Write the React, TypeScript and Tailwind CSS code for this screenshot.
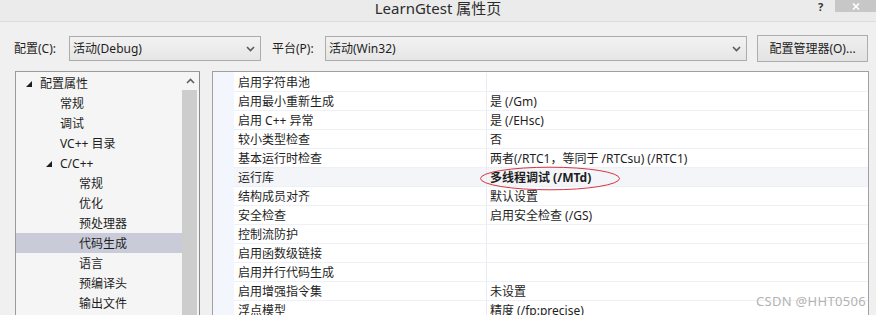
import React from "react";

const font = { fontFamily: '"Noto Sans", "Noto Sans CJK SC", sans-serif' };

function Chevron() {
  return (
    <svg width="9" height="6" viewBox="0 0 9 6" className="shrink-0">
      <path d="M1 1 L4.5 4.5 L8 1" fill="none" stroke="#5a5a5a" strokeWidth="1.6" />
    </svg>
  );
}

function Select({ text, width }: { text: string; width: string }) {
  return (
    <div
      className={`${width} h-[25px] mt-[1px] border border-[#acacac] bg-gradient-to-b from-[#f2f2f2] to-[#e6e6e6] flex items-center justify-between pl-[3px] pr-[5px]`}
    >
      <span className="text-[12px] text-[#1e1e1e] leading-[16px]">{text}</span>
      <Chevron />
    </div>
  );
}

function Tri() {
  return (
    <svg width="6" height="6" viewBox="0 0 6 6" className="shrink-0">
      <polygon points="6,0 6,6 0,6" fill="#1e1e1e" />
    </svg>
  );
}

const tree: { label: string; indent: number; tri?: boolean; sel?: boolean }[] = [
  { label: "配置属性", indent: 24, tri: true },
  { label: "常规", indent: 44 },
  { label: "调试", indent: 44 },
  { label: "VC++ 目录", indent: 44 },
  { label: "C/C++", indent: 44, tri: true },
  { label: "常规", indent: 63 },
  { label: "优化", indent: 63 },
  { label: "预处理器", indent: 63 },
  { label: "代码生成", indent: 63, sel: true },
  { label: "语言", indent: 63 },
  { label: "预编译头", indent: 63 },
  { label: "输出文件", indent: 63 },
];

const rows: { name: string; value: string; bold?: boolean; hl?: boolean }[] = [
  { name: "启用字符串池", value: "" },
  { name: "启用最小重新生成", value: "是 (/Gm)" },
  { name: "启用 C++ 异常", value: "是 (/EHsc)" },
  { name: "较小类型检查", value: "否" },
  { name: "基本运行时检查", value: "两者(/RTC1，等同于 /RTCsu) (/RTC1)" },
  { name: "运行库", value: "多线程调试 (/MTd)", bold: true, hl: true },
  { name: "结构成员对齐", value: "默认设置" },
  { name: "安全检查", value: "启用安全检查 (/GS)" },
  { name: "控制流防护", value: "" },
  { name: "启用函数级链接", value: "" },
  { name: "启用并行代码生成", value: "" },
  { name: "启用增强指令集", value: "未设置" },
  { name: "浮点模型", value: "精度 (/fp:precise)" },
];

export default function App() {
  return (
    <div className="w-[876px] h-[315px] overflow-hidden bg-[#f0f0f0] relative text-[#1e1e1e]" style={font}>
      {/* title bar */}
      <div className="h-[22px] bg-[#ebebeb] border-b border-[#dcdcdc] flex items-start justify-center relative">
        <span className="text-[15px] text-[#2b2b2b] leading-[17px]">LearnGtest 属性页</span>
        <span className="absolute left-[818px] top-0 text-[11px] font-bold text-[#333] leading-[14px]">?</span>
        <div className="absolute right-0 top-0 w-[41px] h-[12px] bg-[#c7c7c7] flex items-center justify-center">
          <svg width="8" height="7" viewBox="0 0 8 7">
            <path d="M1 0.5 L7 6.5 M7 0.5 L1 6.5" stroke="#fff" strokeWidth="1.6" />
          </svg>
        </div>
      </div>

      {/* toolbar */}
      <div className="h-[49px] flex items-start pt-[13px] pl-[14px]">
        <span className="text-[12px] leading-[25px] mt-[1px] w-[55px]">配置(C):</span>
        <Select text="活动(Debug)" width="w-[192px]" />
        <span className="text-[12px] leading-[25px] mt-[1px] ml-[11px] w-[53px]">平台(P):</span>
        <Select text="活动(Win32)" width="w-[422px]" />
        <div className="ml-[10px] w-[111px] h-[27px] border border-[#adadad] bg-gradient-to-b from-[#efefef] to-[#e3e3e3] flex items-center justify-center text-[12px]">
          配置管理器(O)...
        </div>
      </div>

      {/* panels */}
      <div className="flex pl-[15px]">
        {/* tree */}
        <div className="w-[185px] h-[260px] border border-[#9a9a9a] border-r-[#8a8a8a] bg-[#f5f5f5] flex">
          <div className="flex-1 flex flex-col pt-[1px]">
            {tree.map((t, i) => (
              <div
                key={i}
                className={`h-[20px] flex items-center text-[12px] leading-[16px] ${t.sel ? "bg-[#c9cbd9]" : ""}`}
              >
                <div className="flex items-center pt-[1px]" style={{ paddingLeft: t.tri ? t.indent - 14 : t.indent }}>
                  {t.tri && (
                    <span className="w-[14px] flex items-center">
                      <Tri />
                    </span>
                  )}
                  <span>{t.label}</span>
                </div>
              </div>
            ))}
          </div>
          <div className="w-[17px] flex flex-col">
            <div className="h-[18px] flex items-center justify-center">
              <svg width="9" height="6" viewBox="0 0 9 6">
                <path d="M1 5 L4.5 1.5 L8 5" fill="none" stroke="#606060" strokeWidth="1.6" />
              </svg>
            </div>
            <div className="w-[15px] flex-1 bg-[#cdcdcd]" />
          </div>
        </div>

        {/* property grid */}
        <div className="ml-[12px] w-[657px] h-[260px] border border-[#a0a0a0] bg-white flex relative">
          <div className="w-[21px] bg-[#f3f6fc]" />
          <div className="flex-1 flex flex-col pt-[1px]">
            {rows.map((r, i) => (
              <div
                key={i}
                className={`h-[19px] flex border-b border-[#edf0f6] text-[12px] leading-[16px] ${r.hl ? "bg-[#f3f5f8]" : ""}`}
              >
                <div className="w-[253px] border-r border-[#e8ecf4] flex items-center pl-[4px] pt-[2px]">{r.name}</div>
                <div className={`flex-1 flex items-center pl-[3px] pt-[2px] ${r.bold ? "font-bold" : ""}`}>{r.value}</div>
              </div>
            ))}
          </div>
          <svg className="absolute left-[266px] top-[94px]" width="142" height="26" viewBox="0 0 142 26">
            <ellipse cx="71" cy="12.5" rx="69.5" ry="11.3" fill="none" stroke="#d8343e" strokeWidth="1" />
          </svg>
        </div>
      </div>

      <div className="absolute left-[756px] top-[294px] text-[13px] text-[#b3b3b3] leading-[14px] tracking-[0.3px]">
        CSDN @HHT0506
      </div>
    </div>
  );
}
